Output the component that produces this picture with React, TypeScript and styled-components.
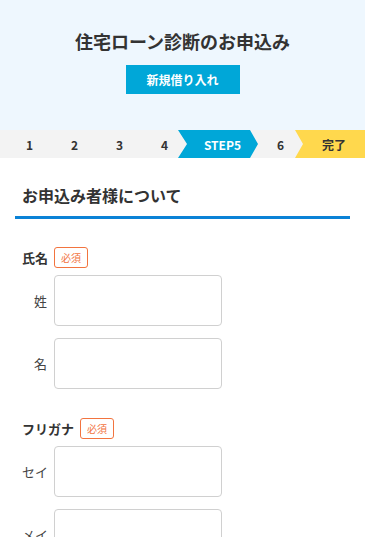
import React from "react";
import styled, { createGlobalStyle } from "styled-components";

const GlobalStyle = createGlobalStyle`
  html, body {
    margin: 0;
    padding: 0;
    background: #fff;
  }
  body {
    font-family: "Noto Sans CJK JP", "Noto Sans", sans-serif;
    color: #333;
  }
  * {
    box-sizing: border-box;
  }
`;

const Page = styled.div`
  width: 365px;
  min-height: 537px;
  overflow: hidden;
`;

const Hero = styled.header`
  height: 130px;
  background: #eef7fe;
  display: flex;
  flex-direction: column;
  align-items: center;
  padding-top: 29px;
`;

const Title = styled.h1`
  margin: 0;
  font-size: 18px;
  line-height: 25px;
  font-weight: 700;
  color: #333;
`;

const NewButton = styled.button`
  margin-top: 11px;
  width: 114px;
  height: 29px;
  border: none;
  border-radius: 0;
  background: #00a7d8;
  color: #fff;
  font-family: inherit;
  font-size: 12px;
  font-weight: 700;
  cursor: pointer;
`;

const StepBar = styled.ol`
  list-style: none;
  margin: 0;
  padding: 0 0 0 7px;
  height: 28px;
  display: flex;
  background: #f3f3f3;
`;

type StepKind = "plain" | "active" | "done";

const Step = styled.li<{ $kind: StepKind }>`
  display: flex;
  align-items: center;
  justify-content: center;
  font-size: 12px;
  font-weight: 700;
  height: 28px;
  color: #333;
  width: 45px;
  flex: none;

  ${({ $kind }) =>
    $kind === "active" &&
    `
    width: 80px;
    margin-left: -9px;
    padding-left: 9px;
    background: #00a7d8;
    color: #fff;
    clip-path: polygon(0 0, 72px 0, 100% 50%, 72px 100%, 0 100%, 9px 50%);
  `}

  ${({ $kind }) =>
    $kind === "done" &&
    `
    flex: 1;
    margin-left: -8px;
    padding-left: 8px;
    background: #ffd84d;
    color: #333;
    clip-path: polygon(0 0, 100% 0, 100% 100%, 0 100%, 8px 50%);
  `}
`;

const Section = styled.section`
  margin: 0 15px;
`;

const SectionTitle = styled.h2`
  margin: 25px 0 0;
  padding: 0 0 9px 7px;
  font-size: 16px;
  line-height: 24px;
  font-weight: 700;
  color: #333;
  border-bottom: 3px solid #0a82d6;
`;

const Form = styled.div`
  padding: 28px 0 0 7px;
  display: flex;
  flex-direction: column;
  gap: 29px;
`;

const FieldGroup = styled.div`
  display: flex;
  flex-direction: column;
`;

const GroupLabel = styled.div`
  display: flex;
  align-items: center;
  gap: 6px;
  height: 21px;
  font-size: 13px;
  font-weight: 700;
  color: #333;
`;

const Required = styled.span`
  display: inline-flex;
  align-items: center;
  justify-content: center;
  height: 21px;
  padding: 0 6px;
  border: 1px solid #f2743f;
  border-radius: 3px;
  background: #fff;
  color: #f2743f;
  font-size: 10px;
  font-weight: 400;
`;

const Inputs = styled.div`
  margin-top: 7px;
  display: flex;
  flex-direction: column;
  gap: 12px;
`;

const InputRow = styled.label`
  display: flex;
  align-items: center;
`;

const SubLabel = styled.span`
  width: 25px;
  margin-right: 7px;
  text-align: right;
  font-size: 13px;
  color: #444;
  white-space: nowrap;
`;

const TextBox = styled.input`
  width: 168px;
  height: 51px;
  border: 1.5px solid #d0d0d0;
  border-radius: 4px;
  background: #fff;
  font-family: inherit;
  font-size: 14px;
  padding: 0 8px;
  outline: none;
`;

const steps: { label: string; kind: StepKind }[] = [
  { label: "1", kind: "plain" },
  { label: "2", kind: "plain" },
  { label: "3", kind: "plain" },
  { label: "4", kind: "plain" },
  { label: "STEP5", kind: "active" },
  { label: "6", kind: "plain" },
  { label: "完了", kind: "done" },
];

const groups = [
  { title: "氏名", fields: ["姓", "名"] },
  { title: "フリガナ", fields: ["セイ", "メイ"] },
];

const App = (): React.ReactElement => {
  return (
    <Page>
      <GlobalStyle />
      <Hero>
        <Title>住宅ローン診断のお申込み</Title>
        <NewButton>新規借り入れ</NewButton>
      </Hero>
      <StepBar>
        {steps.map((s) => (
          <Step key={s.label} $kind={s.kind}>
            {s.label}
          </Step>
        ))}
      </StepBar>
      <Section>
        <SectionTitle>お申込み者様について</SectionTitle>
        <Form>
          {groups.map((g) => (
            <FieldGroup key={g.title}>
              <GroupLabel>
                {g.title}
                <Required>必須</Required>
              </GroupLabel>
              <Inputs>
                {g.fields.map((f) => (
                  <InputRow key={f}>
                    <SubLabel>{f}</SubLabel>
                    <TextBox type="text" />
                  </InputRow>
                ))}
              </Inputs>
            </FieldGroup>
          ))}
        </Form>
      </Section>
    </Page>
  );
};

export default App;
